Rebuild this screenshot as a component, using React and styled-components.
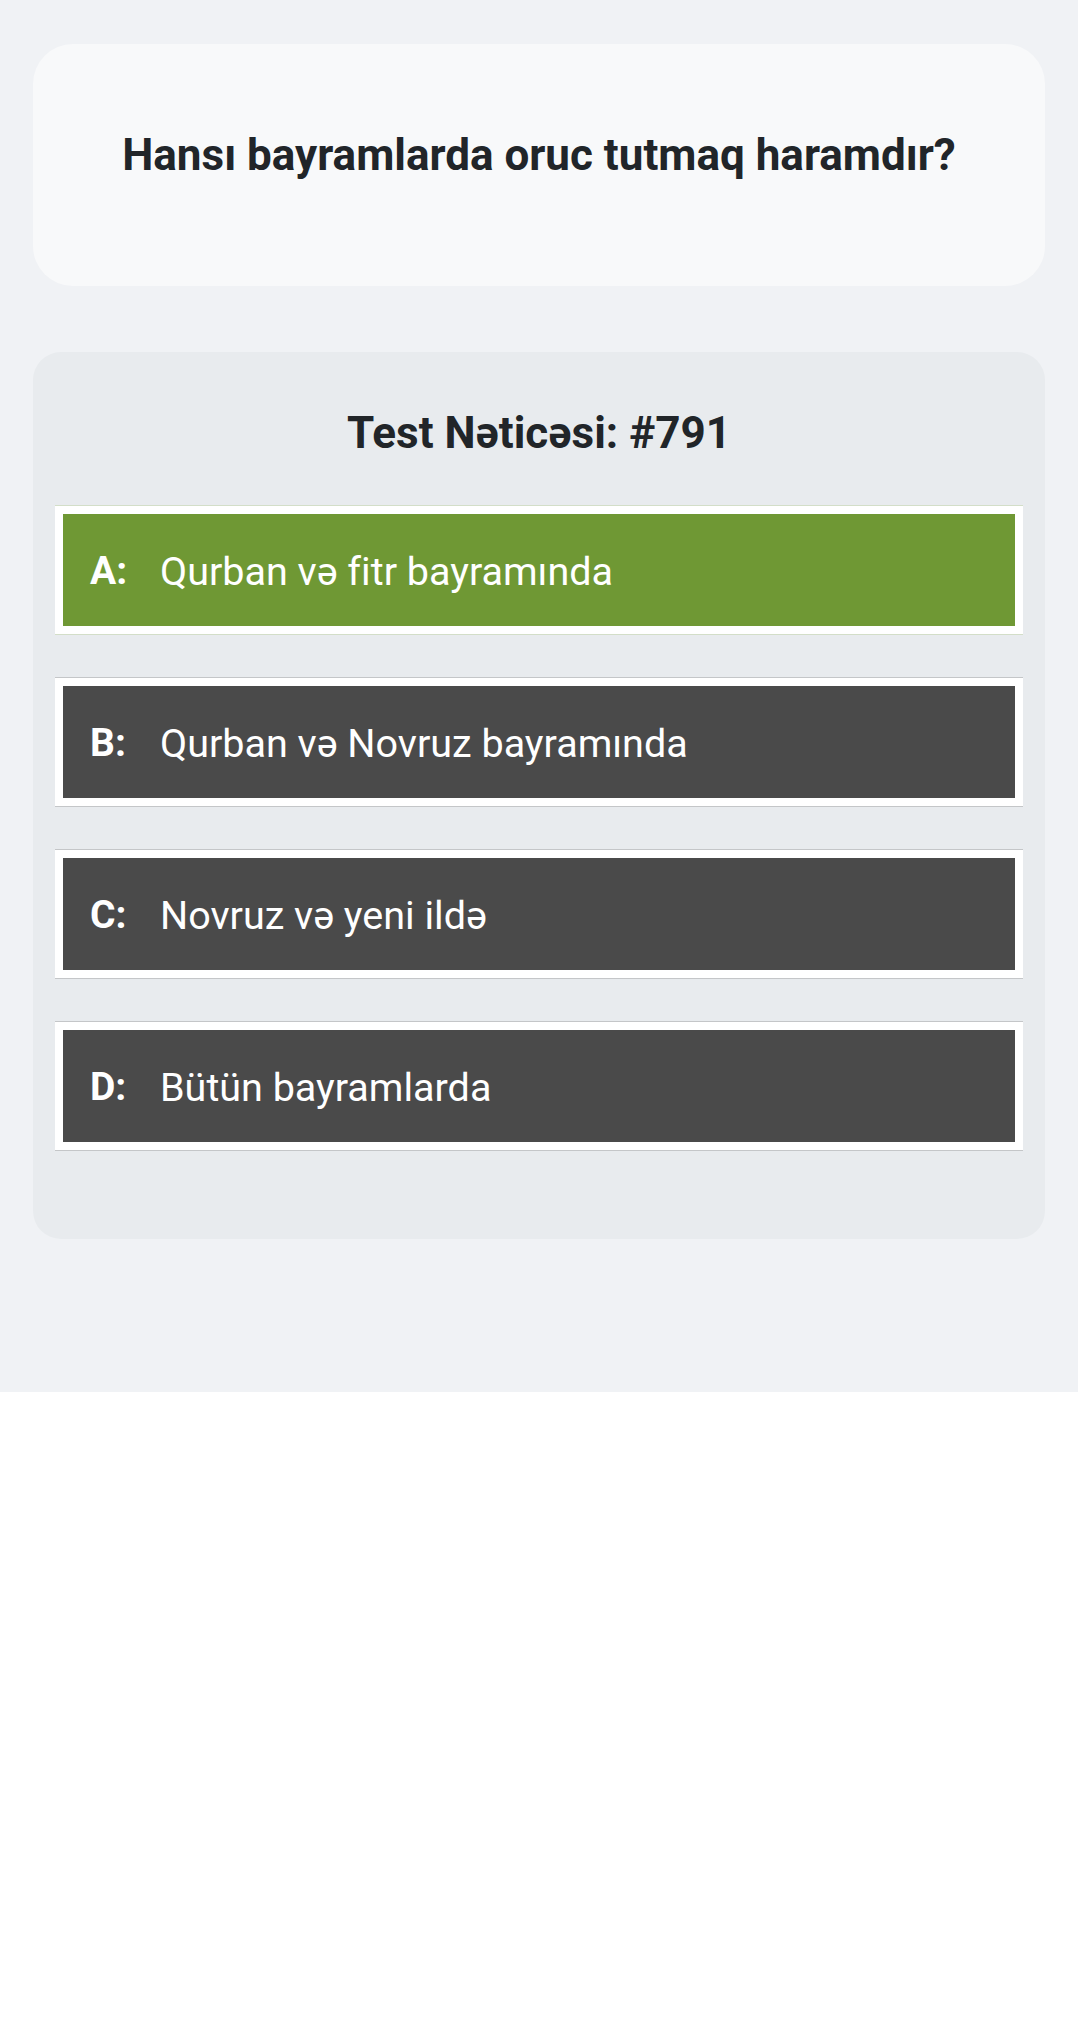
import React from "react";
import styled, { createGlobalStyle } from "styled-components";

const GlobalStyle = createGlobalStyle`
  html, body {
    margin: 0;
    padding: 0;
    background: #ffffff;
  }
  body {
    font-family: Roboto, "Noto Sans", "Liberation Sans", sans-serif;
    color: #212529;
    font-variant-ligatures: none;
  }
  * { box-sizing: border-box; }
`;

const Page = styled.div`
  min-height: 1392px;
  background: #f0f2f5;
  padding: 44px 33px 153px;
  display: flex;
  flex-direction: column;
  gap: 66px;
`;

const QuestionCard = styled.section`
  background: #f8f9fa;
  border-radius: 40px;
  height: 242px;
  padding: 85px 32px 0;
`;

const Question = styled.h2`
  margin: 0;
  text-align: center;
  font-size: 44px;
  line-height: 1.2;
  font-weight: 700;
  color: #212529;
`;

const ResultCard = styled.section`
  background: #e8ebee;
  border-radius: 28px;
  padding: 55px 22px 89px;
  display: flex;
  flex-direction: column;
`;

const ResultTitle = styled.h3`
  margin: 0 0 46px;
  text-align: center;
  font-size: 44px;
  line-height: 1.2;
  font-weight: 700;
  color: #212529;
`;

const OptionList = styled.div`
  display: flex;
  flex-direction: column;
  gap: 44px;
`;

const Option = styled.div`
  display: flex;
  align-items: center;
  height: 128px;
  border: 8px solid #ffffff;
  background: ${(p) => p.$bg};
  box-shadow: 0 -1px 0 ${(p) => p.$edge}, 0 1px 0 ${(p) => p.$edge};
  padding: 4px 0 0 27px;
  color: #ffffff;
  font-size: 39.5px;
  line-height: 1;
`;

const Label = styled.span`
  width: 70px;
  flex-shrink: 0;
  font-weight: 700;
  font-size: 39px;
`;

const Answer = styled.span`
  font-weight: 400;
`;

const options = [
  { key: "A", text: "Qurban və fitr bayramında", correct: true },
  { key: "B", text: "Qurban və Novruz bayramında" },
  { key: "C", text: "Novruz və yeni ildə" },
  { key: "D", text: "Bütün bayramlarda" },
];

export default function App() {
  return (
    <>
      <GlobalStyle />
      <Page>
        <QuestionCard>
          <Question>Hansı bayramlarda oruc tutmaq haramdır?</Question>
        </QuestionCard>
        <ResultCard>
          <ResultTitle>Test Nəticəsi: #791</ResultTitle>
          <OptionList>
            {options.map((o) => (
              <Option
                key={o.key}
                $bg={o.correct ? "#6f9834" : "#4a4a4a"}
                $edge={o.correct ? "#d3dec8" : "#c4c6c8"}
              >
                <Label>{o.key}:</Label>
                <Answer>{o.text}</Answer>
              </Option>
            ))}
          </OptionList>
        </ResultCard>
      </Page>
    </>
  );
}
